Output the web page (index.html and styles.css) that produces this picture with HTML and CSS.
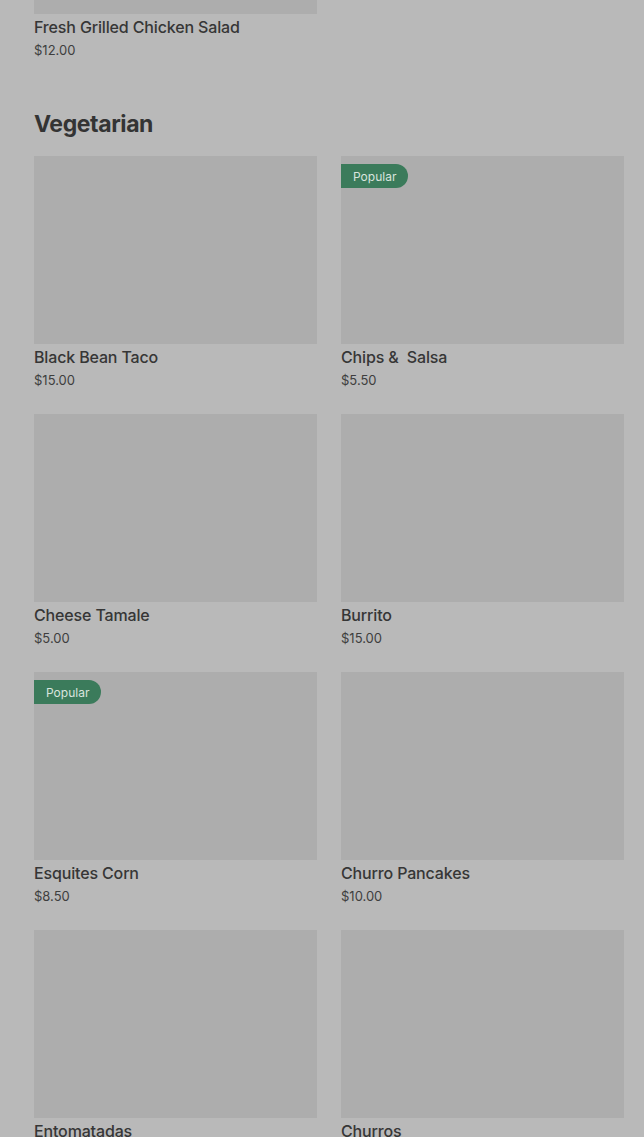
FILE: index.html
```html
<!DOCTYPE html>
<html lang="en">
<head>
  <meta charset="UTF-8" />
  <meta name="viewport" content="width=device-width, initial-scale=1.0"/>
  <title>Menu</title>
  <link rel="stylesheet" href="styles.css">
</head>
<body>
  <div class="menu">
    <section class="menu-section">
      <div class="item-grid">
        <div class="item-card">
          <div class="thumb thumb-cut"></div>
          <h3 class="item-name">Fresh Grilled Chicken Salad</h3>
          <p class="item-price">$12.00</p>
        </div>
      </div>
    </section>

    <section class="menu-section">
      <h2 class="section-title">Vegetarian</h2>
      <div class="item-grid">
        <div class="item-card">
          <div class="thumb"></div>
          <h3 class="item-name">Black Bean Taco</h3>
          <p class="item-price">$15.00</p>
        </div>
        <div class="item-card">
          <div class="thumb"><span class="badge">Popular</span></div>
          <h3 class="item-name">Chips &amp;&nbsp; Salsa</h3>
          <p class="item-price">$5.50</p>
        </div>
        <div class="item-card">
          <div class="thumb"></div>
          <h3 class="item-name">Cheese Tamale</h3>
          <p class="item-price">$5.00</p>
        </div>
        <div class="item-card">
          <div class="thumb"></div>
          <h3 class="item-name">Burrito</h3>
          <p class="item-price">$15.00</p>
        </div>
        <div class="item-card">
          <div class="thumb"><span class="badge">Popular</span></div>
          <h3 class="item-name">Esquites Corn</h3>
          <p class="item-price">$8.50</p>
        </div>
        <div class="item-card">
          <div class="thumb"></div>
          <h3 class="item-name">Churro Pancakes</h3>
          <p class="item-price">$10.00</p>
        </div>
        <div class="item-card">
          <div class="thumb"></div>
          <h3 class="item-name">Entomatadas</h3>
          <p class="item-price">$9.00</p>
        </div>
        <div class="item-card">
          <div class="thumb"></div>
          <h3 class="item-name">Churros</h3>
          <p class="item-price">$6.00</p>
        </div>
      </div>
    </section>
  </div>
</body>
</html>
```

FILE: styles.css
```css
* { box-sizing: border-box; }
body {
  margin: 0;
  padding: 0;
  font-family: Inter, "Noto Sans", sans-serif;
  background-color: #b9b9b9;
  color: #353535;
  overflow: hidden;
}
.menu {
  padding: 0 20px 0 34px;
}
.menu-section {
  display: flex;
  flex-direction: column;
}
.section-title {
  margin: 50px 0 17px;
  font-size: 23px;
  line-height: 30px;
  font-weight: 700;
  letter-spacing: -0.4px;
  color: #343434;
}
.item-grid {
  display: grid;
  grid-template-columns: 1fr 1fr;
  column-gap: 24px;
  row-gap: 25px;
}
.item-card {
  display: flex;
  flex-direction: column;
}
.thumb {
  position: relative;
  height: 188px;
  background-color: #adadad;
}
.thumb-cut {
  height: 14px;
}
.badge {
  position: absolute;
  top: 8px;
  left: 0;
  height: 24px;
  padding: 0 12px;
  display: flex;
  align-items: center;
  background-color: #3b7b5b;
  color: #d9e4de;
  font-size: 12px;
  border-radius: 0 12px 12px 0;
}
.item-name {
  margin: 3px 0 0;
  font-size: 16px;
  line-height: 20px;
  font-weight: 500;
  letter-spacing: -0.15px;
  color: #363636;
}
.item-price {
  margin: 4px 0 0;
  font-size: 13px;
  line-height: 18px;
  color: #3e3e3e;
}
```
